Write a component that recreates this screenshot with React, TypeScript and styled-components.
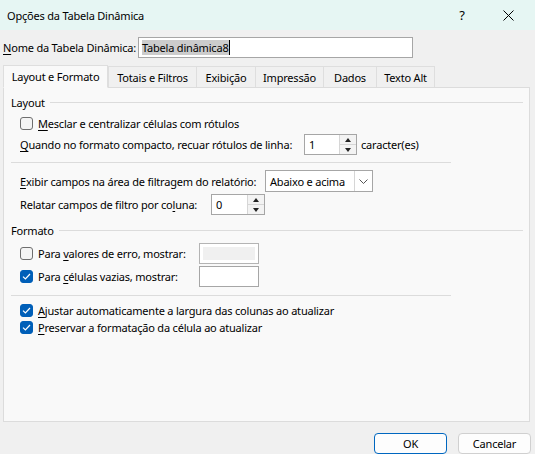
import styled, { createGlobalStyle } from "styled-components";

const GlobalStyle = createGlobalStyle`
  html, body {
    margin: 0;
    padding: 0;
    background: #f0f0f0;
  }
  body {
    font-family: "Noto Sans", "Open Sans", sans-serif;
    font-size: 11px;
    letter-spacing: -0.2px;
    color: #000;
    white-space: nowrap;
  }
`;

const Window = styled.div`
  width: 535px;
  height: 454px;
  background: #f0f0f0;
  display: flex;
  flex-direction: column;
  overflow: hidden;
`;

const TitleBar = styled.div`
  height: 30px;
  background: #e6f6f3;
  display: flex;
  align-items: center;
  padding: 0 4px 0 7px;
`;

const Title = styled.div`
  flex: 1;
  font-size: 11px;
`;

const TitleButton = styled.div`
  width: 46px;
  height: 30px;
  display: flex;
  align-items: center;
  justify-content: center;
  font-size: 13px;
`;

const Body = styled.div`
  padding: 0 3px;
  display: flex;
  flex-direction: column;
`;

const NameRow = styled.div`
  display: flex;
  align-items: center;
  gap: 3px;
  margin-top: 7px;
  height: 21px;
`;

const TextBox = styled.div<{ w: number; disabled?: boolean }>`
  width: ${(p) => p.w}px;
  height: 21px;
  box-sizing: border-box;
  border: 1px solid ${(p) => (p.disabled ? "#b4b4b4" : "#a6a6a6")};
  background: #fff;
  display: flex;
  align-items: center;
  padding: ${(p) => (p.disabled ? "3px" : "0 3px")};
`;

const DisabledFill = styled.div`
  flex: 1;
  align-self: stretch;
  background: #f0f0f0;
`;

const Selected = styled.span`
  background: #cccccc;
  line-height: 15px;
  padding-right: 1px;
`;

const Caret = styled.span`
  display: inline-block;
  width: 1px;
  height: 15px;
  background: #000;
`;

const Key = styled.span`
  text-decoration: underline;
  text-underline-offset: 2px;
`;

const TabStrip = styled.div`
  display: flex;
  align-items: flex-end;
  margin-top: 6px;
  height: 23px;
  position: relative;
  z-index: 1;
`;

const Tab = styled.div<{ active?: boolean; w: number }>`
  box-sizing: border-box;
  width: ${(p) => p.w}px;
  height: ${(p) => (p.active ? 23 : 21)}px;
  display: flex;
  align-items: center;
  justify-content: center;
  background: ${(p) => (p.active ? "#f9f9f9" : "#f0f0f0")};
  border: 1px solid #dedede;
  border-bottom: ${(p) => (p.active ? "1px solid #f9f9f9" : "none")};
  margin-right: ${(p) => (p.active ? 0 : -1)}px;
  margin-bottom: ${(p) => (p.active ? -1 : 0)}px;
`;

const Panel = styled.div`
  height: 335px;
  box-sizing: border-box;
  border: 1px solid #dcdcdc;
  background: #f9f9f9;
  margin-right: 2px;
  display: flex;
  flex-direction: column;
  padding: 0 6px 0 7px;
`;

const GroupHeader = styled.div<{ top: number }>`
  display: flex;
  align-items: center;
  gap: 5px;
  height: 16px;
  margin-top: ${(p) => p.top}px;
  &::after {
    content: "";
    flex: 1;
    height: 1px;
    background: #dcdcdc;
  }
`;

const Separator = styled.div<{ top: number }>`
  height: 1px;
  width: 440px;
  background: #dcdcdc;
  margin-top: ${(p) => p.top}px;
`;

const Row = styled.div<{ top: number; h?: number }>`
  display: flex;
  align-items: center;
  gap: 4px;
  height: ${(p) => p.h ?? 21}px;
  margin-top: ${(p) => p.top}px;
  padding-left: 9px;
`;

const Label = styled.span<{ w?: number }>`
  ${(p) => (p.w ? `width: ${p.w}px;` : "")}
`;

const Box = styled.div<{ checked?: boolean }>`
  width: 13px;
  height: 13px;
  box-sizing: border-box;
  border-radius: 3px;
  border: 1px solid ${(p) => (p.checked ? "#005fb8" : "#6e6e6e")};
  background: ${(p) => (p.checked ? "#005fb8" : "#f4f4f4")};
  display: flex;
  align-items: center;
  justify-content: center;
  margin-right: 1px;
`;

const Spin = styled.div<{ w: number }>`
  width: ${(p) => p.w}px;
  height: 21px;
  box-sizing: border-box;
  border: 1px solid #a6a6a6;
  background: #fff;
  display: flex;
`;

const SpinValue = styled.div`
  flex: 1;
  padding-left: 4px;
  display: flex;
  align-items: center;
`;

const SpinButtons = styled.div`
  width: 16px;
  display: flex;
  flex-direction: column;
  border-left: 1px solid #d6d6d6;
`;

const SpinButton = styled.div<{ down?: boolean }>`
  flex: 1;
  display: flex;
  align-items: center;
  justify-content: center;
  background: #f3f3f3;
  border-top: ${(p) => (p.down ? "1px solid #d6d6d6" : "none")};
  &::before {
    content: "";
    width: 0;
    height: 0;
    border-left: 3.5px solid transparent;
    border-right: 3.5px solid transparent;
    ${(p) =>
      p.down ? "border-top: 4px solid #222;" : "border-bottom: 4px solid #222;"}
  }
`;

const Combo = styled.div`
  width: 108px;
  height: 22px;
  box-sizing: border-box;
  border: 1px solid #a6a6a6;
  background: #fff;
  display: flex;
`;

const ComboValue = styled.div`
  flex: 1;
  padding-left: 4px;
  display: flex;
  align-items: center;
`;

const ComboArrow = styled.div`
  width: 17px;
  border-left: 1px solid #d6d6d6;
  display: flex;
  align-items: center;
  justify-content: center;
`;

const Footer = styled.div`
  display: flex;
  justify-content: flex-end;
  gap: 11px;
  margin-top: 11px;
  padding-right: 1px;
`;

const Button = styled.div<{ primary?: boolean }>`
  width: 73px;
  height: 21px;
  box-sizing: border-box;
  border: 1px solid ${(p) => (p.primary ? "#0067c0" : "#d0d0d0")};
  border-radius: 4px;
  background: #fdfdfd;
  display: flex;
  align-items: center;
  justify-content: center;
`;

const Check = () => (
  <svg width="9" height="9" viewBox="0 0 9 9">
    <path d="M1 4.6 L3.4 7 L8 2" fill="none" stroke="#fff" strokeWidth="1.2" />
  </svg>
);

const SpinBox = ({ value, w }: { value: string; w: number }) => (
  <Spin w={w}>
    <SpinValue>{value}</SpinValue>
    <SpinButtons>
      <SpinButton />
      <SpinButton down />
    </SpinButtons>
  </Spin>
);

const tabs = [
  { label: "Totais e Filtros", w: 89 },
  { label: "Exibição", w: 60 },
  { label: "Impressão", w: 69 },
  { label: "Dados", w: 54 },
  { label: "Texto Alt", w: 59 },
];

export default function App() {
  return (
    <Window>
      <GlobalStyle />
      <TitleBar>
        <Title>Opções da Tabela Dinâmica</Title>
        <TitleButton>?</TitleButton>
        <TitleButton>
          <svg width="11" height="11" viewBox="0 0 11 11">
            <path d="M0.5 0.5 L10.5 10.5 M10.5 0.5 L0.5 10.5" stroke="#000" strokeWidth="1" />
          </svg>
        </TitleButton>
      </TitleBar>
      <Body>
        <NameRow>
          <Label w={132}>
            <Key>N</Key>ome da Tabela Dinâmica:
          </Label>
          <TextBox w={275}>
            <Selected>Tabela dinâmica8</Selected>
            <Caret />
          </TextBox>
        </NameRow>
        <TabStrip>
          <Tab active w={105}>
            Layout e Formato
          </Tab>
          {tabs.map((t) => (
            <Tab key={t.label} w={t.w}>
              {t.label}
            </Tab>
          ))}
        </TabStrip>
        <Panel>
          <GroupHeader top={6}>Layout</GroupHeader>
          <Row top={3} h={20}>
            <Box />
            <Label>
              <Key>M</Key>esclar e centralizar células com rótulos
            </Label>
          </Row>
          <Row top={1}>
            <Label w={280}>
              <Key>Q</Key>uando no formato compacto, recuar rótulos de linha:
            </Label>
            <SpinBox value="1" w={53} />
            <Label>caracter(es)</Label>
          </Row>
          <Separator top={7} />
          <Row top={7} h={22}>
            <Label w={241}>
              <Key>E</Key>xibir campos na área de filtragem do relatório:
            </Label>
            <Combo>
              <ComboValue>Abaixo e acima</ComboValue>
              <ComboArrow>
                <svg width="9" height="5" viewBox="0 0 9 5">
                  <path d="M0.5 0.5 L4.5 4.5 L8.5 0.5" fill="none" stroke="#555" strokeWidth="1" />
                </svg>
              </ComboArrow>
            </Combo>
          </Row>
          <Row top={2}>
            <Label w={187}>
              Relatar campos de filtro por co<Key>l</Key>una:
            </Label>
            <SpinBox value="0" w={54} />
          </Row>
          <GroupHeader top={7}>Formato</GroupHeader>
          <Row top={5}>
            <Box />
            <Label w={157}>
              Para <Key>v</Key>alores de erro, mostrar:
            </Label>
            <TextBox w={60} disabled>
              <DisabledFill />
            </TextBox>
          </Row>
          <Row top={2}>
            <Box checked>
              <Check />
            </Box>
            <Label w={157}>
              Para <Key>c</Key>élulas vazias, mostrar:
            </Label>
            <TextBox w={60} />
          </Row>
          <Separator top={8} />
          <Row top={6} h={17}>
            <Box checked>
              <Check />
            </Box>
            <Label>
              <Key>A</Key>justar automaticamente a largura das colunas ao atualizar
            </Label>
          </Row>
          <Row top={0} h={17}>
            <Box checked>
              <Check />
            </Box>
            <Label>
              <Key>P</Key>reservar a formatação da célula ao atualizar
            </Label>
          </Row>
        </Panel>
        <Footer>
          <Button primary>OK</Button>
          <Button>Cancelar</Button>
        </Footer>
      </Body>
    </Window>
  );
}
